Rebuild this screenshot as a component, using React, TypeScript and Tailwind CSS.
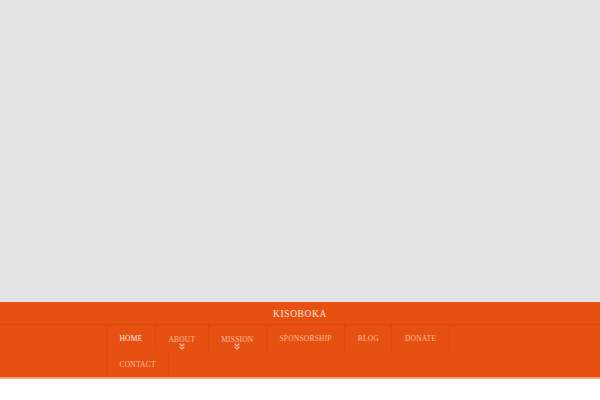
import React from "react";

const items = [
  { label: "HOME", active: true },
  { label: "ABOUT", sub: true },
  { label: "MISSION", sub: true },
  { label: "SPONSORSHIP" },
  { label: "BLOG" },
  { label: "DONATE" },
  { label: "CONTACT" },
];

function Chevrons() {
  return (
    <svg width="7" height="7" viewBox="0 0 7 7" className="absolute left-1/2 -translate-x-1/2 top-[18px]" fill="none" stroke="currentColor" strokeWidth="1.2">
      <path d="M1.2 0.8 L3.5 3 L5.8 0.8" />
      <path d="M1.2 3.8 L3.5 6 L5.8 3.8" />
    </svg>
  );
}

export default function App() {
  return (
    <div className="w-[600px] h-[400px] bg-white" style={{ fontFamily: '"Liberation Serif", "DejaVu Serif", serif' }}>
      <div className="h-[302px] bg-[#e3e3e3]" />
      <div className="bg-[#e65112] border-b-2 border-[#f2a47f]">
        <div className="h-[23px] flex items-center justify-center border-b border-[#dc4a0e]">
          <span className="text-[9.5px] tracking-[0.6px] text-[#fbe6d8] translate-y-[1px]">KISOBOKA</span>
        </div>
        <div className="w-[388px] mx-auto flex flex-wrap">
          {items.map((it) => (
            <div
              key={it.label}
              className={`relative h-[26px] px-[12.5px] flex items-center border-r border-[#db4a0d] ${it.label === "HOME" || it.label === "CONTACT" ? "border-l" : ""}`}
            >
              <span className={`text-[7.5px] tracking-[0.2px] ${it.active ? "text-[#fdf1e9]" : "text-[#f8bfa2]"} ${it.sub ? "translate-y-[1.5px]" : "translate-y-[1px]"}`}>
                {it.label}
              </span>
              {it.sub && (
                <span className="text-[#f8bfa2]">
                  <Chevrons />
                </span>
              )}
            </div>
          ))}
        </div>
      </div>
    </div>
  );
}
